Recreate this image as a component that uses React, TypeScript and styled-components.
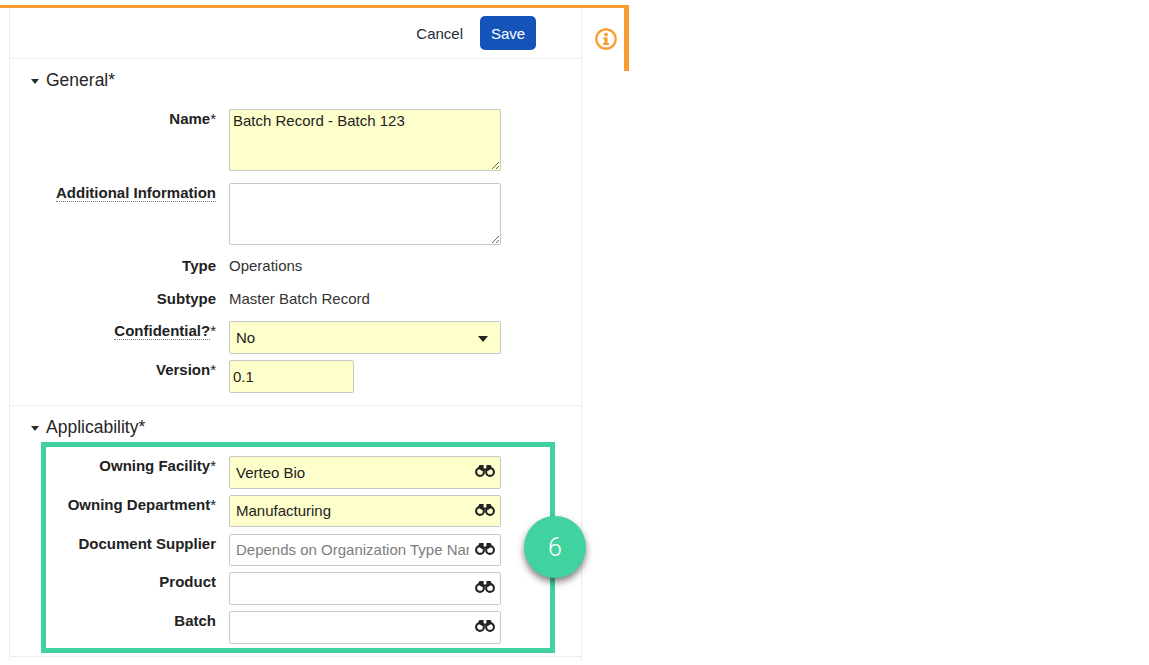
import React from 'react';
import styled, { createGlobalStyle } from 'styled-components';

const GlobalStyle = createGlobalStyle`
    html, body {
        margin: 0;
        padding: 0;
        background: #fff;
        font-family: "Liberation Sans", Arial, sans-serif;
        color: #1f1f1f;
    }
`

const Frame = styled.div`
    display: flex;
    align-items: flex-start;
    width: 629px;
    height: 660px;
    margin-top: 5px;
    border-top: 3px solid #fb9b30;
    box-sizing: border-box;
    overflow: hidden;
`

const Main = styled.div`
    width: 573px;
    height: 652px;
    margin-left: 9px;
    flex: none;
    box-sizing: border-box;
    border-left: 1px solid #eeeeee;
    border-right: 1px solid #eeeeee;
`

const SideRail = styled.div`
    flex: 1;
    height: 63px;
    display: flex;
    justify-content: center;
    padding: 20px 0 0 6px;
    box-sizing: border-box;
    border-right: 5px solid #fb9b30;
`

const Toolbar = styled.div`
    height: 51px;
    box-sizing: border-box;
    padding: 8px 45px 0 0;
    display: flex;
    justify-content: flex-end;
    align-items: flex-start;
    gap: 17px;
    border-bottom: 1px solid #eeeeee;
`

const CancelLink = styled.a`
    font-size: 15px;
    line-height: 35px;
    color: #1f2a37;
`

const SaveButton = styled.button`
    width: 56px;
    height: 34px;
    padding: 0;
    border: none;
    border-radius: 5px;
    background: #1454b8;
    color: #fff;
    font: 15px "Liberation Sans", Arial, sans-serif;
`

const Section = styled.section<{ $height: number }>`
    height: ${props => props.$height}px;
    box-sizing: border-box;
    border-bottom: 1px solid #eeeeee;
`

const SectionTitle = styled.h3`
    margin: 0;
    height: 36px;
    box-sizing: border-box;
    padding: 6px 0 0 21px;
    display: flex;
    align-items: center;
    gap: 7px;
    font-size: 17.5px;
    font-weight: normal;
    color: #262626;
`

const Caret = styled.span`
    width: 0;
    height: 0;
    margin-top: 3px;
    border-left: 4.5px solid transparent;
    border-right: 4.5px solid transparent;
    border-top: 5px solid #2b2b2b;
`

const Rows = styled.div`
    display: flex;
    flex-direction: column;
    padding-top: 14px;
`

const Row = styled.div<{ $gap?: number }>`
    display: grid;
    grid-template-columns: 206px 272px;
    column-gap: 13px;
    margin-bottom: ${props => props.$gap ?? 7}px;
`

const Label = styled.div<{ $readOnly?: boolean }>`
    justify-self: end;
    align-self: start;
    font-size: 15px;
    font-weight: bold;
    line-height: 16px;
    margin-top: ${props => props.$readOnly ? 1 : 2}px;
    color: #222;
    white-space: nowrap;
`

const HintText = styled.span`
    border-bottom: 1px dotted #777;
`

const Star = styled.span`
    font-weight: normal;
`

const StaticValue = styled.div`
    font-size: 15px;
    line-height: 18px;
    color: #333;
`

const Area = styled.textarea<{ $required?: boolean }>`
    display: block;
    width: 272px;
    height: 62px;
    box-sizing: border-box;
    padding: 2px 3px;
    margin: 0;
    border: 1px solid #c8c8c8;
    border-radius: 2px;
    background: ${props => props.$required ? '#ffffcc' : '#fff'};
    font: 15px "Liberation Sans", Arial, sans-serif;
    color: #222;
`

const Box = styled.div<{ $required?: boolean; $width?: number; $height?: number; $inset?: number }>`
    position: relative;
    display: flex;
    align-items: center;
    width: ${props => props.$width ?? 272}px;
    height: ${props => props.$height ?? 33}px;
    box-sizing: border-box;
    padding: 0 31px ${props => props.$height === 32 ? 1 : 0}px ${props => props.$inset ?? 6}px;
    border: 1px solid #c8c8c8;
    border-radius: 2px;
    background: ${props => props.$required ? '#ffffcc' : '#fff'};
    font-size: 15px;
    color: #222;
    overflow: hidden;
    white-space: nowrap;
`

const Placeholder = styled.span`
    color: #7d7d7d;
    overflow: hidden;
`

const BoxIcon = styled.span`
    position: absolute;
    right: 5px;
    top: 7px;
    display: flex;
`

const SelectCaret = styled.span`
    position: absolute;
    right: 12px;
    top: 14px;
    width: 0;
    height: 0;
    border-left: 5.5px solid transparent;
    border-right: 5.5px solid transparent;
    border-top: 6px solid #222;
`

const Highlight = styled.div`
    position: relative;
    width: 514px;
    height: 211px;
    margin-left: 31px;
    box-sizing: border-box;
    border: 5px solid #40d29f;
    padding-top: 9px;
`

const HighlightRow = styled.div<{ $gap: number }>`
    display: grid;
    grid-template-columns: 170px 272px;
    column-gap: 13px;
    margin-bottom: ${props => props.$gap}px;
`

const Badge = styled.div`
    position: absolute;
    right: -36px;
    top: 69px;
    width: 62px;
    height: 62px;
    border-radius: 50%;
    background: #40d29f;
    box-shadow: 0 4px 7px rgba(0, 0, 0, 0.5);
    display: flex;
    align-items: center;
    justify-content: center;
    color: #fff;
    font-family: Roboto, sans-serif;
    font-weight: 300;
    font-size: 25px;
`

const InfoIcon = () => (
    <svg width="22" height="22" viewBox="0 0 22 22" fill="none">
        <circle cx="11" cy="11" r="9.7" stroke="#fb9b30" strokeWidth="2.2" />
        <circle cx="11" cy="6.6" r="1.9" fill="#fb9b30" />
        <path d="M8 9.4h4.6v5.6h1.4v1.9H8V15h1.4v-3.7H8z" fill="#fb9b30" />
    </svg>
)

const Binoculars = () => (
    <svg width="20" height="14" viewBox="0 0 20 14" fill="none">
        <circle cx="5" cy="8" r="3.9" stroke="#222" strokeWidth="2.1" />
        <circle cx="15" cy="8" r="3.9" stroke="#222" strokeWidth="2.1" />
        <path d="M3 4 L4.4 1 H8.6 V4.4 H11.4 V1 H15.6 L17 4 L13 7 L10 6.2 L7 7 Z" fill="#222" />
    </svg>
)

const lookups = [
    { label: 'Owning Facility', star: true, value: 'Verteo Bio', gap: 6, height: 33 },
    { label: 'Owning Department', star: true, value: 'Manufacturing', gap: 7, height: 32 },
    { label: 'Document Supplier', placeholder: 'Depends on Organization Type Name', gap: 6, height: 32 },
    { label: 'Product', gap: 6, height: 33 },
    { label: 'Batch', gap: 0, height: 33 },
]

export default function App () {
    return (
        <>
            <GlobalStyle />
            <Frame>
                <Main>
                    <Toolbar>
                        <CancelLink>Cancel</CancelLink>
                        <SaveButton>Save</SaveButton>
                    </Toolbar>

                    <Section $height={347}>
                        <SectionTitle><Caret />General*</SectionTitle>
                        <Rows>
                            <Row $gap={12}>
                                <Label>Name<Star>*</Star></Label>
                                <Area $required defaultValue="Batch Record - Batch 123" />
                            </Row>
                            <Row $gap={12}>
                                <Label><HintText>Additional Information</HintText></Label>
                                <Area />
                            </Row>
                            <Row $gap={15}>
                                <Label $readOnly>Type</Label>
                                <StaticValue>Operations</StaticValue>
                            </Row>
                            <Row $gap={13}>
                                <Label $readOnly>Subtype</Label>
                                <StaticValue>Master Batch Record</StaticValue>
                            </Row>
                            <Row $gap={6}>
                                <Label><HintText>Confidential?</HintText><Star>*</Star></Label>
                                <Box $required>No<SelectCaret /></Box>
                            </Row>
                            <Row>
                                <Label>Version<Star>*</Star></Label>
                                <Box $required $width={125} $inset={3}>0.1</Box>
                            </Row>
                        </Rows>
                    </Section>

                    <Section $height={251}>
                        <SectionTitle><Caret />Applicability*</SectionTitle>
                        <Highlight>
                            {lookups.map(item => (
                                <HighlightRow key={item.label} $gap={item.gap}>
                                    <Label>{item.label}{item.star && <Star>*</Star>}</Label>
                                    <Box $required={item.star} $height={item.height}>
                                        {item.value}
                                        {item.placeholder && <Placeholder>{item.placeholder}</Placeholder>}
                                        <BoxIcon><Binoculars /></BoxIcon>
                                    </Box>
                                </HighlightRow>
                            ))}
                            <Badge>6</Badge>
                        </Highlight>
                    </Section>
                </Main>
                <SideRail>
                    <InfoIcon />
                </SideRail>
            </Frame>
        </>
    );
}
